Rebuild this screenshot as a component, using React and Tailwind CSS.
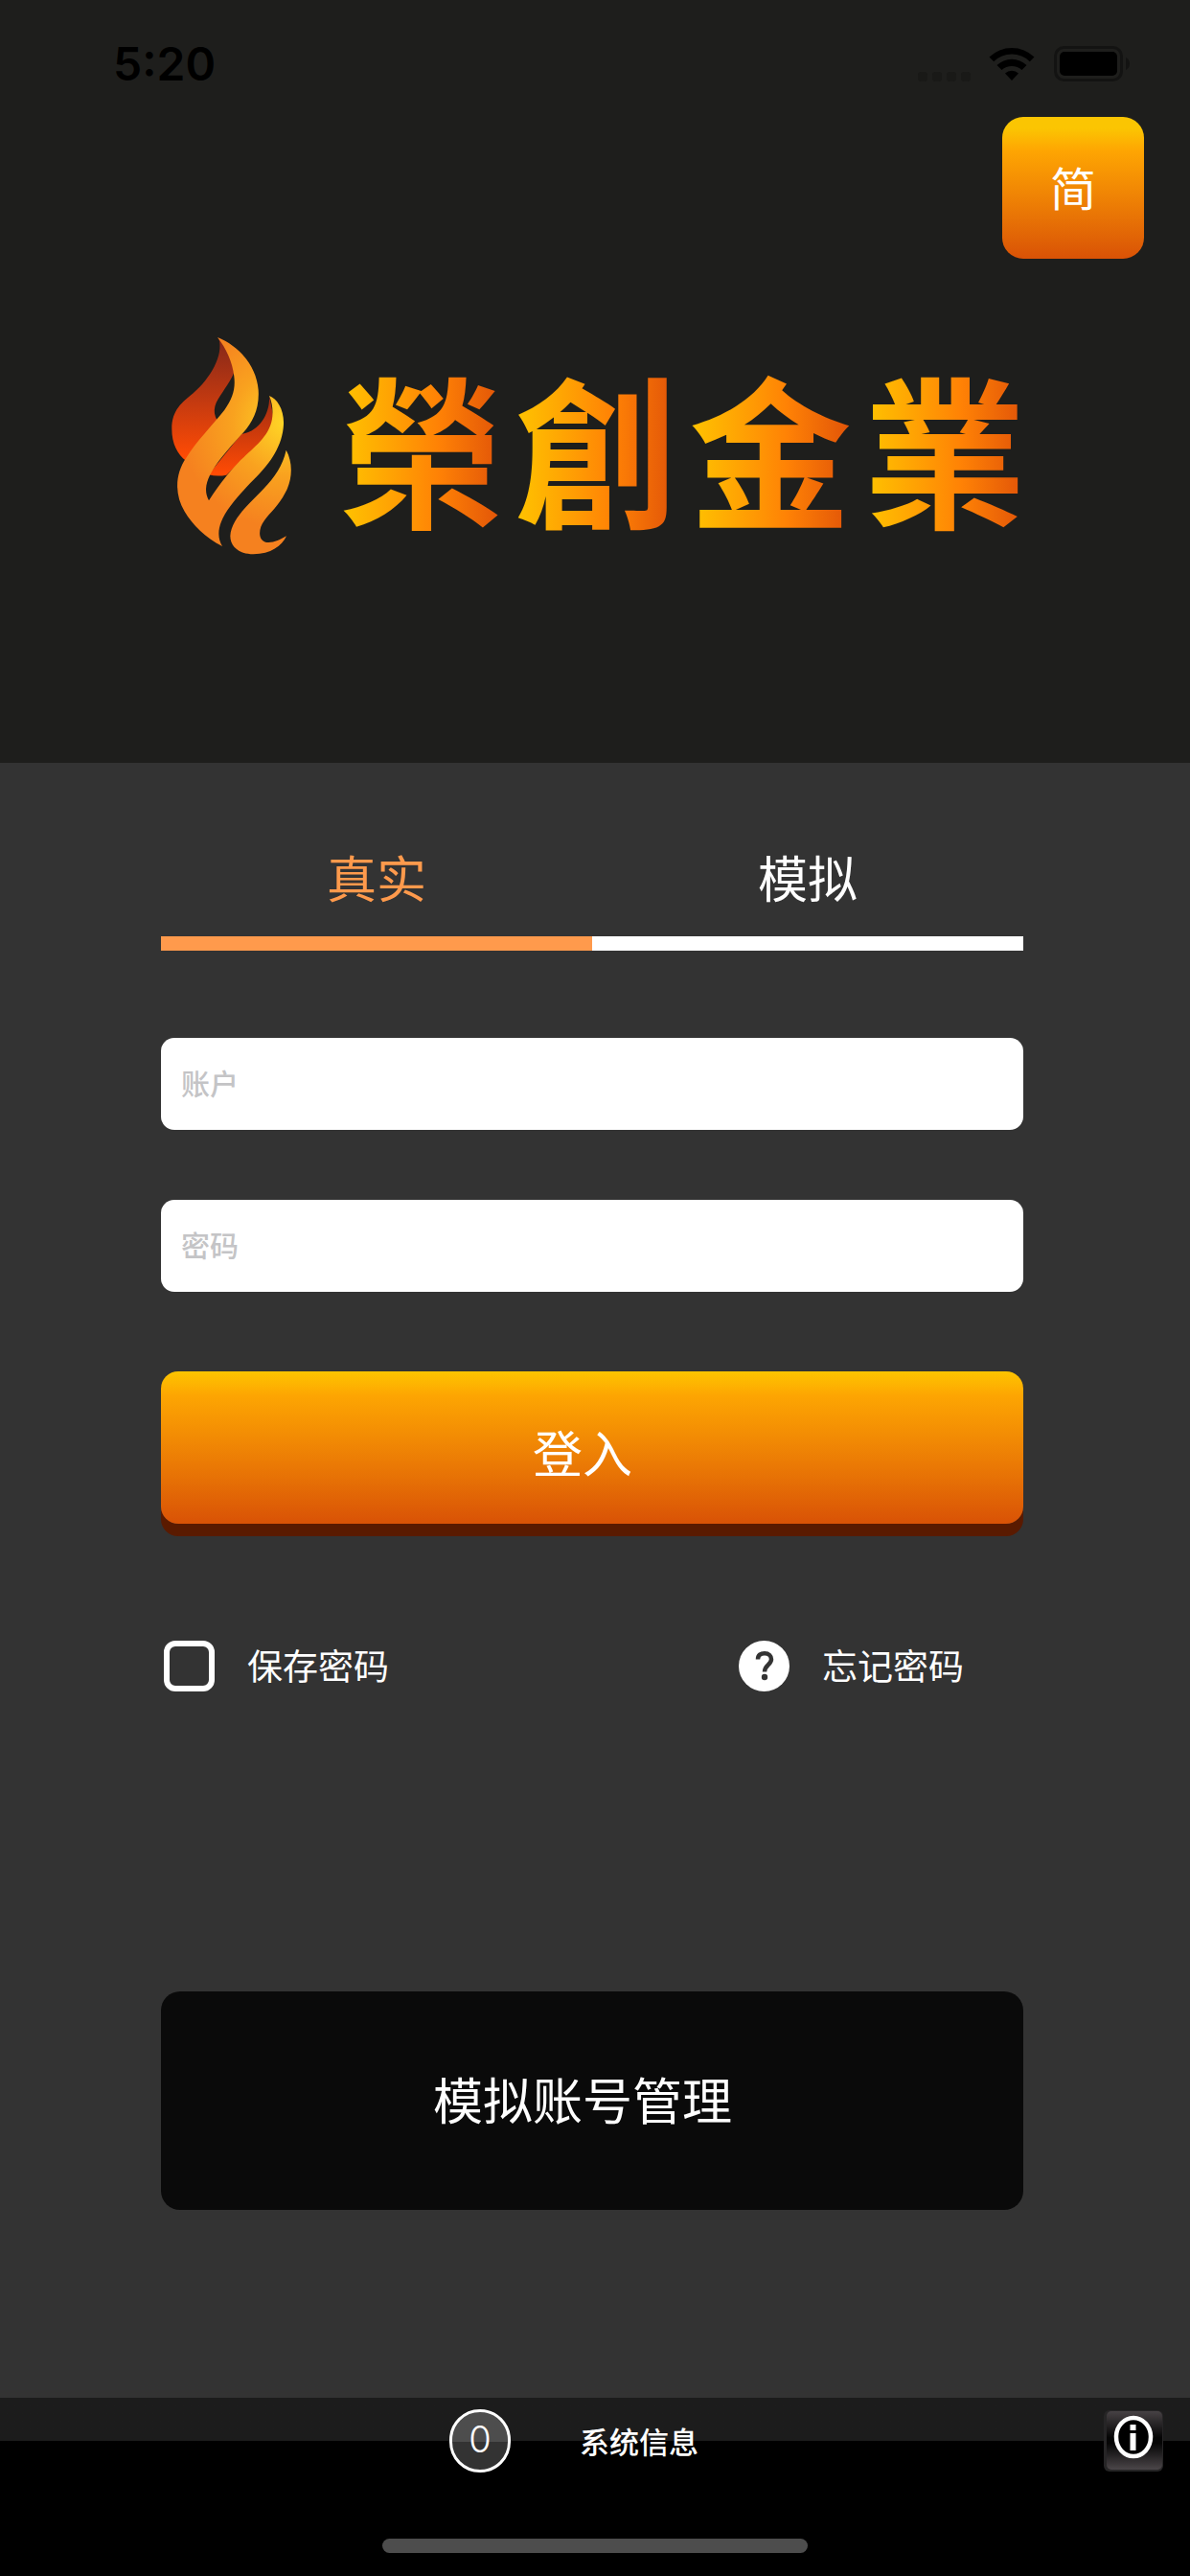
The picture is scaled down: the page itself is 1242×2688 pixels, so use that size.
import { useState } from "react";

const tabs = [
  { id: "real", label: "真实" },
  { id: "demo", label: "模拟" },
];

const brand = ["榮", "創", "金", "業"];

function StatusBar() {
  return (
    <div className="flex h-[122px] items-center justify-between pt-3 pl-[118px] pr-[62px] text-black">
      <span className="font-['Inter',sans-serif] text-[48px] leading-[48px] font-semibold">
        5:20
      </span>
      <div className="flex items-center">
        <svg width="56" height="38" viewBox="0 0 56 38" fill="#191917">
          <rect x="0" y="27" width="10" height="10" rx="3" />
          <rect x="15" y="27" width="10" height="10" rx="3" />
          <rect x="30" y="27" width="10" height="10" rx="3" />
          <rect x="45" y="27" width="10" height="10" rx="3" />
        </svg>
        <svg className="ml-[18px]" width="48" height="38" viewBox="0 0 48 38">
          <path d="M0.500 11.500 A34 34 0 0 1 47.500 11.500 L42.800 16.200 A27 27 0 0 0 5.200 16.200 Z" />
          <path d="M8.500 20 A22.500 22.500 0 0 1 39.500 20 L34.500 25 A15.500 15.500 0 0 0 13.500 25 Z" />
          <path d="M17 28.500 A10.500 10.500 0 0 1 31 28.500 L24 36 Z" />
        </svg>
        <svg className="ml-5" width="80" height="38" viewBox="0 0 80 38">
          <rect x="1.500" y="1.500" width="69" height="34" rx="9" fill="none" stroke="#131312" strokeWidth="3" />
          <rect x="6" y="6" width="60" height="25" rx="5" />
          <path d="M75 12 Q79 14 79 18.500 Q79 23 75 25 Z" fill="#131312" />
        </svg>
      </div>
    </div>
  );
}

function Flame() {
  return (
    <svg width="126" height="228" viewBox="84 60 378 684" aria-hidden="true">
      <defs>
        <linearGradient id="ember" gradientUnits="userSpaceOnUse" x1="0" y1="90" x2="0" y2="440">
          <stop offset="0" stopColor="#8c2a18" />
          <stop offset="0.500" stopColor="#c43a10" />
          <stop offset="1" stopColor="#ff4b04" />
        </linearGradient>
        <linearGradient id="emberRight" gradientUnits="userSpaceOnUse" x1="0" y1="250" x2="0" y2="490">
          <stop offset="0" stopColor="#a02c12" />
          <stop offset="1" stopColor="#ff4b04" />
        </linearGradient>
        <radialGradient id="blaze" gradientUnits="userSpaceOnUse" cx="440" cy="330" r="330">
          <stop offset="0" stopColor="#ffd726" />
          <stop offset="0.500" stopColor="#f9a21f" />
          <stop offset="1" stopColor="#f5811f" />
        </radialGradient>
      </defs>
      <path
        fill="url(#ember)"
        d="M232 66 C248 120 205 192 152 238 C118 266 85 290 85 350 C85 395 102 428 130 450 L228 325 C208 290 222 265 245 233 C262 208 274 190 280 172 C285 130 250 90 232 66 Z"
      />
      <path
        fill="url(#emberRight)"
        d="M390 246 C394 300 358 360 303 365 L200 493 Q228 500 256 494 L410 345 Z"
      />
      <path
        fill="url(#blaze)"
        d="M228 63 C292 88 350 150 356 228 C360 290 335 335 303 367 C260 415 225 455 205 493 C189 525 188 550 201 574 C225 535 258 492 300 448 C345 405 395 370 400 310 C402 285 398 265 390 246 C415 255 437 290 435 335 C432 400 395 455 345 505 C300 550 255 600 240 640 C228 670 230 695 243 717 C190 690 150 650 125 608 C93 555 95 490 130 440 C160 390 215 335 250 290 C275 255 285 225 280 185 C275 140 255 97 228 63 Z"
      />
      <path
        fill="url(#blaze)"
        d="M443 416 C465 455 463 510 440 550 C420 590 390 615 375 636 C355 662 355 697 378 704 C398 709 422 698 444 685 C430 715 395 742 340 742 C295 742 268 718 268 685 C270 640 312 598 352 558 C397 513 430 475 443 416 Z"
      />
    </svg>
  );
}

function InfoIcon() {
  return (
    <svg width="62" height="64" viewBox="0 0 62 64" aria-hidden="true">
      <defs>
        <linearGradient id="gloss" x1="0" y1="0" x2="0" y2="1">
          <stop offset="0" stopColor="#474245" />
          <stop offset="0.450" stopColor="#050505" />
          <stop offset="0.550" stopColor="#050505" />
          <stop offset="1" stopColor="#4b4649" />
        </linearGradient>
      </defs>
      <rect width="62" height="64" rx="6" fill="#262526" />
      <rect x="3" y="1" width="58" height="61" rx="5" fill="url(#gloss)" />
      <ellipse cx="31" cy="28" rx="18" ry="20" fill="#000" stroke="#fff" strokeWidth="4.500" />
      <rect x="27.500" y="15" width="6" height="6" fill="#fff" />
      <rect x="27.500" y="24" width="6" height="18" fill="#fff" />
    </svg>
  );
}

export default function App() {
  const [activeTab, setActiveTab] = useState("real");
  const [account, setAccount] = useState("");
  const [password, setPassword] = useState("");
  const [remember, setRemember] = useState(false);

  return (
    <div
      lang="zh-CN"
      className="flex min-h-screen flex-col bg-[#333333] font-['Noto_Sans_CJK_SC',sans-serif] text-white"
    >
      {/* Header */}
      <header className="bg-[#1e1e1c] pb-[217px]">
        <StatusBar />
        <div className="flex justify-end pr-12">
          <button
            type="button"
            className="h-[148px] w-[148px] rounded-[22px] bg-linear-to-b from-[#fbc502] from-8% via-[#fea502] via-24% to-[#d95206] pb-1 text-[48px] leading-[52px]"
          >
            简
          </button>
        </div>

        {/* Brand */}
        <div className="mt-[81px] flex items-center justify-center gap-[50px] pl-2">
          <Flame />
          <h1
            lang="zh-Hant"
            className="flex gap-3 font-['Noto_Sans_CJK_TC',sans-serif] text-[170px] leading-[228px] font-bold"
          >
            {brand.map((char) => (
              <span
                key={char}
                className="bg-linear-to-r from-[#ffc400] via-[#ff8205] via-60% to-[#e05208] bg-clip-text text-transparent"
              >
                {char}
              </span>
            ))}
          </h1>
        </div>
      </header>

      {/* Login form */}
      <main className="flex-1 pt-[93px] pr-[174px] pb-[196px] pl-[168px]">
        <div className="flex">
          {tabs.map((tab) => (
            <button
              key={tab.id}
              type="button"
              onClick={() => setActiveTab(tab.id)}
              className={`flex-1 border-b-[15px] pb-9 text-[52px] leading-[52px] ${
                activeTab === tab.id
                  ? "border-[#ff9a4c] text-[#ff9a4c]"
                  : "border-white text-white"
              }`}
            >
              {tab.label}
            </button>
          ))}
        </div>

        <form className="mt-[91px]" onSubmit={(e) => e.preventDefault()}>
          <div className="flex flex-col gap-[73px]">
            <input
              type="text"
              aria-label="账户"
              placeholder="账户"
              value={account}
              onChange={(e) => setAccount(e.target.value)}
              className="h-24 w-full rounded-[14px] bg-white px-[21px] pb-1 text-[30px] font-medium text-black placeholder:text-[#c4c4c6]"
            />
            <input
              type="password"
              aria-label="密码"
              placeholder="密码"
              value={password}
              onChange={(e) => setPassword(e.target.value)}
              className="h-24 w-full rounded-[14px] bg-white px-[21px] pb-1 text-[30px] font-medium text-black placeholder:text-[#c4c4c6]"
            />
          </div>

          <button
            type="submit"
            className="mt-[83px] h-[159px] w-full rounded-[18px] bg-linear-to-b from-[#fdc400] via-[#fda502] via-16% to-[#d95206] pt-2 pr-5 text-[52px] leading-[52px] shadow-[0_13px_0_#5a1a00]"
          >
            登入
          </button>

          <div className="mt-[121px] grid grid-cols-3 text-[37px] leading-[53px]">
            <label className="col-span-2 flex items-center gap-[34px] pl-[3px]">
              <input
                type="checkbox"
                checked={remember}
                onChange={(e) => setRemember(e.target.checked)}
                className="h-[53px] w-[53px] appearance-none rounded-[12px] border-[6px] border-white checked:bg-[#ff9a4c]"
              />
              <span className="pb-[2px]">保存密码</span>
            </label>
            <a href="#forgot" className="flex items-center gap-[34px] pl-[3px]">
              <svg width="53" height="53" viewBox="0 0 53 53" aria-hidden="true">
                <circle cx="26.500" cy="26.500" r="26.500" fill="#fff" />
                <path
                  d="M20 19.500 C20 14.800 23 13.300 27 13.300 C31.500 13.300 34 16 34 19.500 C34 25 27 25.500 27 32.500"
                  fill="none"
                  stroke="#333"
                  strokeWidth="4.500"
                />
                <circle cx="27" cy="38" r="3.200" fill="#333" />
              </svg>
              <span className="pb-[2px]">忘记密码</span>
            </a>
          </div>
        </form>

        <button
          type="button"
          className="mt-[312px] h-[228px] w-full rounded-[20px] bg-[#0a0a0a] pr-5 pb-1 text-[52px] leading-[52px]"
        >
          模拟账号管理
        </button>
      </main>

      {/* Bottom bar */}
      <footer className="bg-black">
        <div className="flex h-[90px] items-center bg-linear-to-b from-[#1c1c1c] from-50% to-black to-50% pr-7 pl-[469px]">
          <span className="flex h-[66px] w-16 items-center justify-center rounded-full border-[3px] border-white bg-linear-to-b from-[#4d4d4d] from-52% to-[#333333] to-52% pb-1 font-['Inter',sans-serif] text-[38px] leading-[38px] font-light">
            0
          </span>
          <span className="ml-[72px] text-[31px] font-medium">系统信息</span>
          <button type="button" aria-label="系统信息" className="ml-auto">
            <InfoIcon />
          </button>
        </div>
        <div className="flex justify-center pt-[57px] pb-6">
          <div className="h-[15px] w-[444px] rounded-full bg-[#4d4d4d]" />
        </div>
      </footer>
    </div>
  );
}
